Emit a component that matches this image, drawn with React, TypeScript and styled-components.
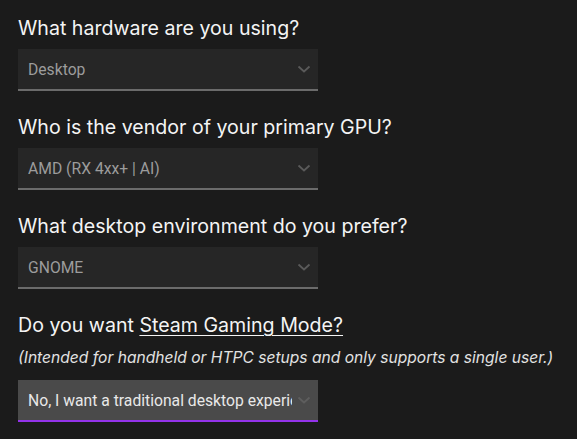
import React from "react";
import styled, { createGlobalStyle } from "styled-components";

const GlobalStyle = createGlobalStyle`
  html, body {
    margin: 0;
    background: #1b1b1b;
  }
  body {
    font-family: Inter, "Noto Sans", sans-serif;
    color: #f2f2f2;
  }
`;

const Page = styled.div`
  padding: 14px 18px 0;
  display: flex;
  flex-direction: column;
`;

const Question = styled.section`
  display: flex;
  flex-direction: column;
  margin-bottom: 22px;
`;

const Heading = styled.h2`
  margin: 0 0 7px;
  font-size: 19.6px;
  font-weight: 400;
  line-height: 28px;
  color: #f4f4f4;
`;

const Link = styled.a`
  color: inherit;
  text-decoration: underline;
  text-underline-offset: 3px;
  text-decoration-thickness: 1px;
`;

const Note = styled.p`
  margin: 1px 0 11px;
  font-size: 15.6px;
  font-style: italic;
  line-height: 22px;
  color: #e2e2e2;
`;

const SelectBox = styled.div`
  position: relative;
  width: 300px;
`;

const Select = styled.select<{ $active?: boolean }>`
  appearance: none;
  width: 300px;
  height: 42px;
  box-sizing: border-box;
  margin: 0;
  padding: 0 26px 0 10px;
  border: none;
  border-bottom: 2px solid ${(p) => (p.$active ? "#9333ea" : "#6b6b6b")};
  border-radius: 0;
  background: ${(p) => (p.$active ? "#4a4a4a" : "#262626")};
  color: ${(p) => (p.$active ? "#e8e8e8" : "#9c9c9c")};
  font-family: Roboto, "Liberation Sans", sans-serif;
  font-size: 15.7px;
  outline: none;
`;

const Chevron = styled.svg`
  position: absolute;
  right: 7px;
  top: 15px;
  width: 14px;
  height: 10px;
  pointer-events: none;
`;

type Q = { value: string; active?: boolean };

const Dropdown: React.FC<Q> = ({ value, active }) => (
  <SelectBox>
    <Select $active={active} defaultValue={value}>
      <option>{value}</option>
    </Select>
    <Chevron viewBox="0 0 14 10">
      <path d="M1.5 2.5 L7 7.5 L12.5 2.5" fill="none" stroke={active ? "#5e5e5e" : "#5a5a5a"} strokeWidth="1.8" />
    </Chevron>
  </SelectBox>
);

export default function App() {
  return (
    <>
      <GlobalStyle />
      <Page>
        <Question>
          <Heading>What hardware are you using?</Heading>
          <Dropdown value="Desktop" />
        </Question>
        <Question>
          <Heading>Who is the vendor of your primary GPU?</Heading>
          <Dropdown value="AMD (RX 4xx+ | AI)" />
        </Question>
        <Question>
          <Heading>What desktop environment do you prefer?</Heading>
          <Dropdown value="GNOME" />
        </Question>
        <Question>
          <Heading>
            Do you want <Link href="#">Steam Gaming Mode?</Link>
          </Heading>
          <Note>(Intended for handheld or HTPC setups and only supports a single user.)</Note>
          <Dropdown value="No, I want a traditional desktop experience" active />
        </Question>
      </Page>
    </>
  );
}
